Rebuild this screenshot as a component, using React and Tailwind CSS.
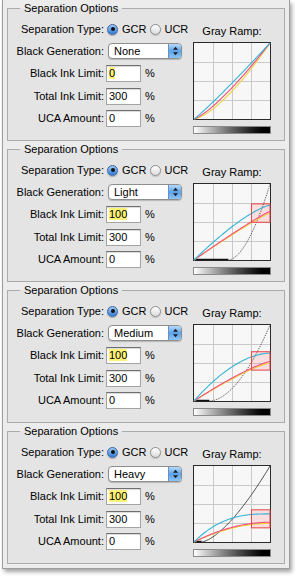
const sat = (L, k) => (x) => L * (1 - Math.pow(1 - x, k));
const pw = (p) => (x) => Math.pow(x, p);
const blk = (s, p) => (x) => (x < s ? 0 : Math.pow((x - s) / (1 - s), p));

const PANELS = [
  {
    gen: "None",
    limit: "0",
    cyan: pw(1.08),
    magenta: pw(1.28),
    yellow: pw(1.45),
    black: null,
  },
  {
    gen: "Light",
    limit: "100",
    cyan: sat(0.72, 1.35),
    magenta: sat(0.64, 1.1),
    yellow: sat(0.62, 1.1),
    black: { s: 0.45, p: 1.8, dotted: true },
    box: [0.745, 0.49],
  },
  {
    gen: "Medium",
    limit: "100",
    cyan: sat(0.63, 1.8),
    magenta: sat(0.52, 1.25),
    yellow: sat(0.5, 1.25),
    black: { s: 0.2, p: 1.85, dotted: true },
    box: [0.655, 0.4],
  },
  {
    gen: "Heavy",
    limit: "100",
    cyan: sat(0.37, 2.7),
    magenta: sat(0.26, 1.95),
    yellow: sat(0.245, 1.95),
    black: { s: 0.1, p: 1.5, dotted: false },
    box: [0.43, 0.18],
  },
];

// plot coords inside the 78px box
const px = (x) => 1 + x * 76;
const py = (y) => 77 - y * 76;

function curve(f, from = 0) {
  let d = "";
  for (let i = 0; i <= 60; i++) {
    const x = from + ((1 - from) * i) / 60;
    d += (i ? " L" : "M") + px(x).toFixed(2) + " " + py(f(x)).toFixed(2);
  }
  return d;
}

function Ramp({ p }) {
  return (
    <svg width="78" height="78" viewBox="0 0 78 78" className="block">
      <rect x="0.5" y="0.5" width="77" height="77" fill="#f7f7f7" stroke="#2a2a2a" />
      {[1, 2, 3].map((i) => (
        <g key={i} stroke="#c9c9c9" strokeWidth="1">
          <line x1={1 + i * 19 + 0.5} y1="1" x2={1 + i * 19 + 0.5} y2="77" />
          <line x1="1" y1={1 + i * 19 + 0.5} x2="77" y2={1 + i * 19 + 0.5} />
        </g>
      ))}
      {p.box && (
        <rect
          x={px(0.75)}
          y={py(p.box[0])}
          width={px(1) - px(0.75)}
          height={py(p.box[1]) - py(p.box[0])}
          fill="rgba(255,110,110,0.18)"
        />
      )}
      {p.black && (
        <>
          <line x1="1" y1="76.5" x2={px(p.black.s)} y2="76.5" stroke="#111" strokeWidth="1.5" />
          <path
            d={curve(blk(p.black.s, p.black.p), p.black.s)}
            fill="none"
            stroke="#3a3a3a"
            strokeWidth="0.9"
            strokeDasharray={p.black.dotted ? "1.2 1.2" : undefined}
          />
        </>
      )}
      <path d={curve(p.yellow)} fill="none" stroke="#f3d23a" strokeWidth="1.1" />
      <path d={curve(p.magenta)} fill="none" stroke="#f24f7c" strokeWidth="1.1" />
      <path d={curve(p.cyan)} fill="none" stroke="#34b4d8" strokeWidth="1.1" />
      {p.box && (
        <rect
          x={px(0.75) + 0.5}
          y={py(p.box[0]) + 0.5}
          width={px(1) - px(0.75) - 0.5}
          height={py(p.box[1]) - py(p.box[0]) - 1}
          fill="none"
          stroke="#e8474a"
          strokeWidth="1"
        />
      )}
    </svg>
  );
}

function Radio({ on }) {
  return on ? (
    <span className="w-[11px] h-[11px] rounded-full border border-[#3e64a0] bg-linear-to-b from-[#9ccaf5] to-[#2f7bd8] flex items-center justify-center shadow-[0_1px_1px_rgba(0,0,0,0.25)]">
      <span className="w-[4px] h-[4px] rounded-full bg-[#111]" />
    </span>
  ) : (
    <span className="block w-[11px] h-[11px] rounded-full border border-[#8c8c8c] bg-linear-to-b from-[#ffffff] to-[#dcdcdc] shadow-[0_1px_1px_rgba(0,0,0,0.15)]" />
  );
}

function Popup({ value }) {
  return (
    <div className="ml-[4px] w-[74px] h-[16px] flex rounded-[4px] border border-[#8e8e8e] bg-white overflow-hidden shadow-[0_1px_1px_rgba(0,0,0,0.2)]">
      <span className="flex-1 pl-[5px] leading-[14px]">{value}</span>
      <span className="w-[13px] h-full bg-linear-to-b from-[#b6dafa] via-[#5aa2ea] to-[#8cc4f5] border-l border-[#6d8fbf] flex items-center justify-center">
        <svg width="7" height="10" viewBox="0 0 7 10">
          <path d="M3.5 0.8 L6 3.8 H1 Z" fill="#1b1b1b" />
          <path d="M3.5 9.2 L6 6.2 H1 Z" fill="#1b1b1b" />
        </svg>
      </span>
    </div>
  );
}

function Field({ value, hi }) {
  return (
    <div className="ml-[2px] w-[35px] h-[17px] border border-[#a4a4a4] border-t-[#6f6f6f] bg-white shadow-[inset_0_1px_1px_rgba(0,0,0,0.15)] pl-[2px] leading-[15px]">
      <span className={hi ? "bg-[#fff377]" : ""}>{value}</span>
    </div>
  );
}

function Label({ children }) {
  return <span className="w-[96px] text-right shrink-0">{children}</span>;
}

function Panel({ p }) {
  return (
    <fieldset className="h-[139px] mb-[2px] border border-[#ababab] bg-[#e4e4e4] p-0 m-0">
      <legend className="ml-[12px] px-[4px] leading-[13px]">Separation Options</legend>
      <div className="flex">
        <div className="w-[185px] pt-[6px]">
          <div className="flex items-center h-[16px]">
            <Label>Separation Type:</Label>
            <span className="ml-[3px]"><Radio on /></span>
            <span className="ml-[4px]">GCR</span>
            <span className="ml-[4px]"><Radio /></span>
            <span className="ml-[3px]">UCR</span>
          </div>
          <div className="flex items-center h-[16px] mt-[6px]">
            <Label>Black Generation:</Label>
            <Popup value={p.gen} />
          </div>
          <div className="flex items-center h-[17px] mt-[6px]">
            <Label>Black Ink Limit:</Label>
            <Field value={p.limit} hi />
            <span className="ml-[4px]">%</span>
          </div>
          <div className="flex items-center h-[17px] mt-[6px]">
            <Label>Total Ink Limit:</Label>
            <Field value="300" />
            <span className="ml-[4px]">%</span>
          </div>
          <div className="flex items-center h-[17px] mt-[5px]">
            <Label>UCA Amount:</Label>
            <Field value="0" />
            <span className="ml-[4px]">%</span>
          </div>
        </div>
        <div className="w-[78px] pt-[10px] flex flex-col items-center">
          <span className="leading-[13px]">Gray Ramp:</span>
          <div className="mt-[4px]">
            <Ramp p={p} />
          </div>
          <div className="mt-[6px] w-[78px] h-[8px] border border-[#8a8a8a] bg-linear-to-r from-white to-black" />
        </div>
      </div>
    </fieldset>
  );
}

export default function App() {
  return (
    <div className="w-[296px] h-[576px] bg-white pl-[2px] font-['Liberation_Sans',Arial,sans-serif] text-[11px] text-black">
      <div className="w-[288px] h-[569px] bg-[#ececec] border-x border-b border-[#9d9d9d] pt-[2px] px-[4px] shadow-[2px_3px_4px_rgba(0,0,0,0.35)]">
        {PANELS.map((p, i) => (
          <Panel key={i} p={p} />
        ))}
      </div>
    </div>
  );
}
